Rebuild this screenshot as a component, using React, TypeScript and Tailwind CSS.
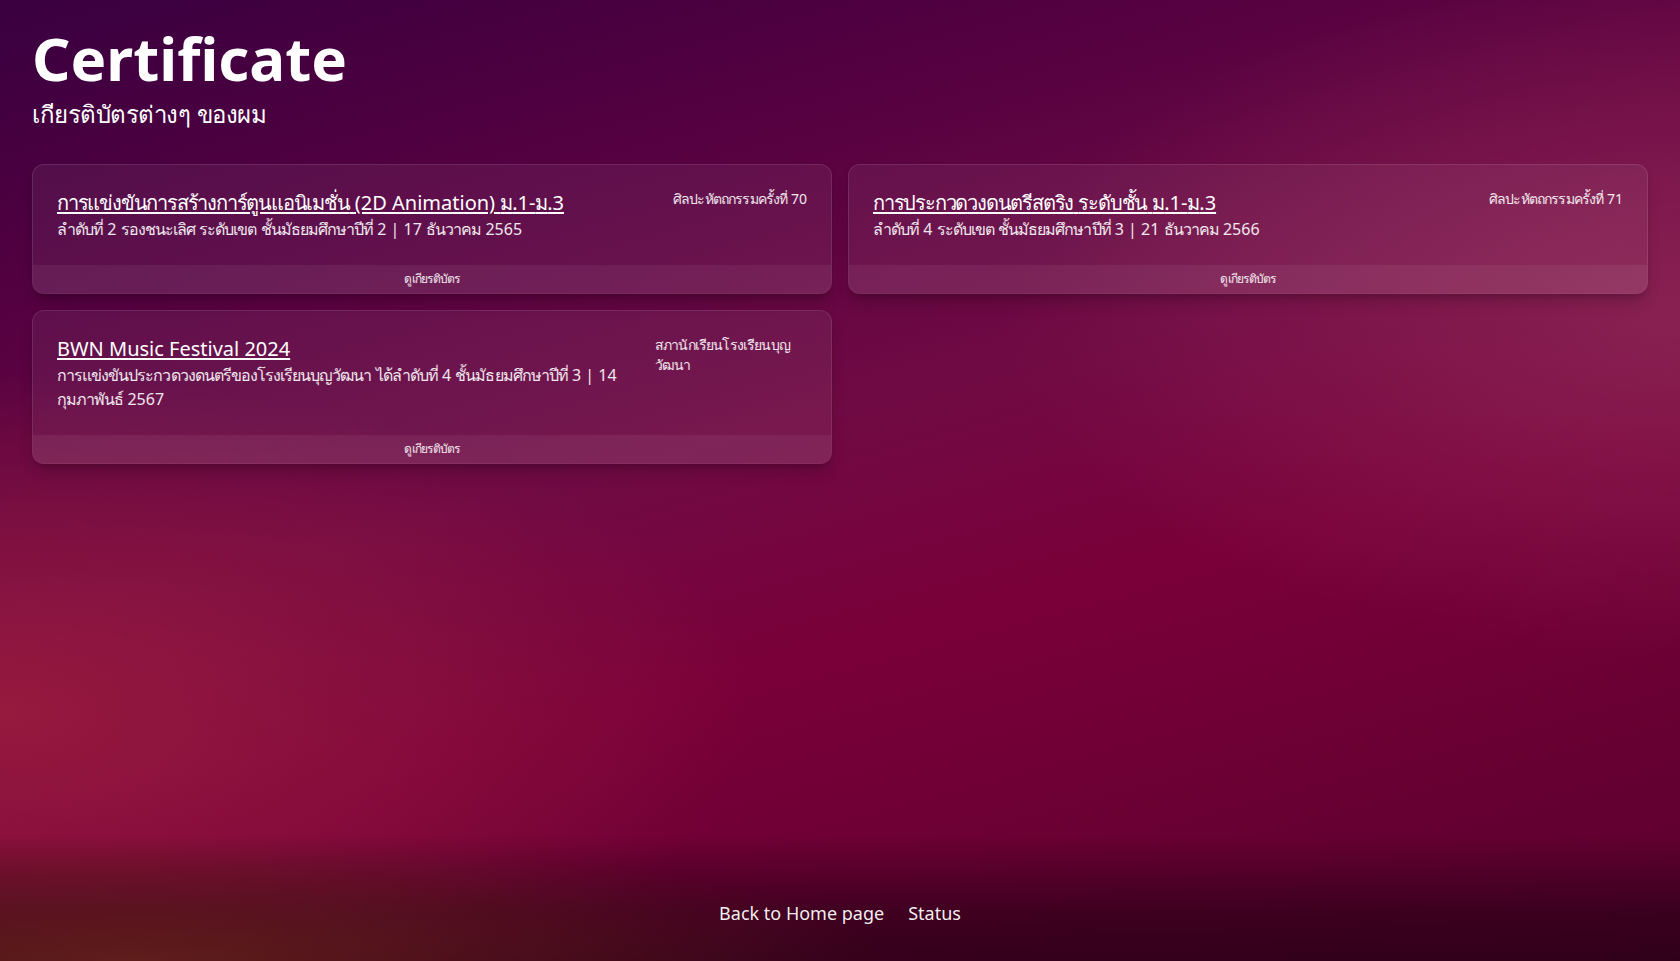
import React from 'react';

type Cert = {
  title: string;
  detail: string;
  source: string;
};

const certs: Cert[] = [
  {
    title: 'การแข่งขันการสร้างการ์ตูนแอนิเมชั่น (2D Animation) ม.1-ม.3',
    detail: 'ลำดับที่ 2 รองชนะเลิศ ระดับเขต ชั้นมัธยมศึกษาปีที่ 2 | 17 ธันวาคม 2565',
    source: 'ศิลปะหัตถกรรมครั้งที่ 70',
  },
  {
    title: 'การประกวดวงดนตรีสตริง ระดับชั้น ม.1-ม.3',
    detail: 'ลำดับที่ 4 ระดับเขต ชั้นมัธยมศึกษาปีที่ 3 | 21 ธันวาคม 2566',
    source: 'ศิลปะหัตถกรรมครั้งที่ 71',
  },
  {
    title: 'BWN Music Festival 2024',
    detail: 'การแข่งขันประกวดวงดนตรีของโรงเรียนบุญวัฒนา ได้ลำดับที่ 4 ชั้นมัธยมศึกษาปีที่ 3 | 14 กุมภาพันธ์ 2567',
    source: 'สภานักเรียนโรงเรียนบุญวัฒนา',
  },
];

// thai runs are set a bit tighter, latin stays as is
const Th: React.FC<{ text: string; loose?: boolean }> = ({ text, loose }) => (
  <>
    {text.split(/([\u0E00-\u0E7F]+)/).map((part, i) =>
      /[\u0E00-\u0E7F]/.test(part) ? (
        <span key={i} className={loose ? 'tracking-[-0.02em]' : 'tracking-[-0.06em]'}>
          {part}
        </span>
      ) : (
        <React.Fragment key={i}>{part}</React.Fragment>
      )
    )}
  </>
);

const CertCard: React.FC<{ cert: Cert }> = ({ cert }) => {
  return (
    <div className="flex flex-col overflow-hidden rounded-xl border border-white/10 bg-white/[0.06] shadow-lg shadow-black/20">
      <div className="flex flex-1 items-start justify-between gap-4 px-6 pt-6 pb-6">
        <div className="min-w-0 flex-1">
          <a href="#" className="text-xl leading-7 text-white underline underline-offset-2">
            <Th text={cert.title} />
          </a>
          <p className="text-base leading-6 text-white/90">
            <Th text={cert.detail} />
          </p>
        </div>
        <div className="max-w-[152px] shrink-0 text-sm leading-5 text-white/90">
          <Th text={cert.source} />
        </div>
      </div>
      <div className="bg-white/[0.06] py-1.5 text-center text-xs leading-4 text-white/90">
        <Th text="ดูเกียรติบัตร" />
      </div>
    </div>
  );
};

export default function App() {
  return (
    <div
      className="flex min-h-screen flex-col bg-[radial-gradient(ellipse_45%_35%_at_0%_74%,rgba(152,26,62,0.95),transparent),radial-gradient(ellipse_40%_35%_at_100%_33%,rgba(140,38,86,0.85),transparent),linear-gradient(165deg,#390040_0%,#520040_20%,#700a44_45%,#7a0039_62%,#6a0033_80%,#5a002e_100%)] text-white"
      style={{ fontFamily: '"Noto Sans", "Open Sans", sans-serif' }}
    >
      <main className="flex-1 px-8 pt-7">
        <h1 className="text-6xl leading-none font-bold">Certificate</h1>
        <p className="mt-2.5 text-2xl leading-8">
          <Th text="เกียรติบัตรต่างๆ ของผม" loose />
        </p>

        <div className="mt-[34px] grid grid-cols-2 gap-4">
          {certs.map((c, i) => (
            <CertCard key={i} cert={c} />
          ))}
        </div>
      </main>

      <footer className="bg-[radial-gradient(ellipse_45%_100%_at_8%_100%,rgba(110,40,25,0.7),transparent),linear-gradient(to_bottom,transparent,rgba(25,0,15,0.5)_60%,rgba(25,0,15,0.65))] pt-16 pb-[34px]">
        <nav className="flex justify-center gap-6 text-lg leading-7 text-white/95">
          <a href="#">Back to Home page</a>
          <a href="#">Status</a>
        </nav>
      </footer>
    </div>
  );
}
